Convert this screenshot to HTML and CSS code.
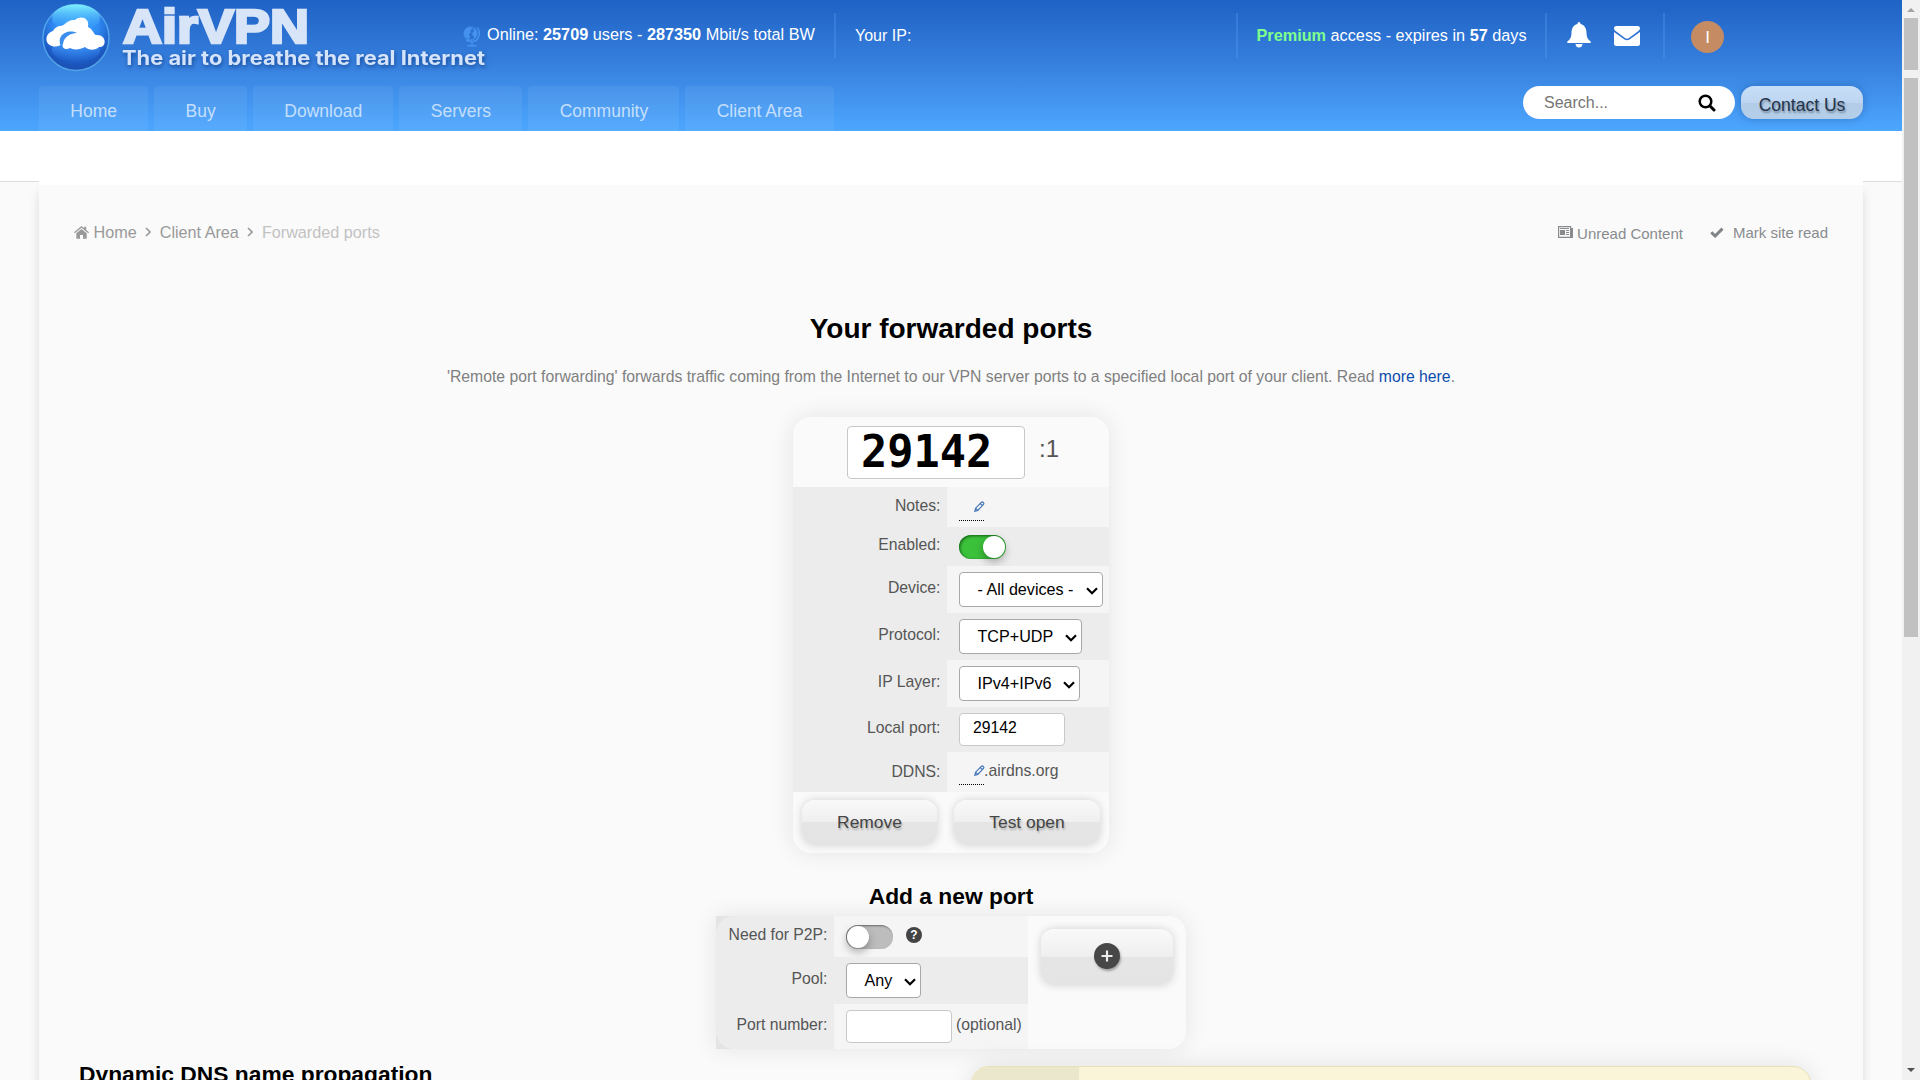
FILE: index.html
```html
<!DOCTYPE html>
<html lang="en">
<head>
<meta charset="utf-8">
<title>Forwarded ports - AirVPN</title>
<link rel="stylesheet" href="styles.css">
</head>
<body>
<div class="page">
  <header class="header">
    <div class="topbar">
      <svg class="logo" width="424" height="74" viewBox="0 0 424 74">
        <defs>
          <radialGradient id="orb" cx=".5" cy=".3" r=".75">
            <stop offset="0" stop-color="#3aa0fb"/><stop offset=".45" stop-color="#2f8bf3"/><stop offset=".78" stop-color="#1c57c0"/><stop offset="1" stop-color="#1a4ba8"/>
          </radialGradient>
          <linearGradient id="shine" x1="0" y1="0" x2="0" y2="1">
            <stop offset="0" stop-color="#7ff2ff"/><stop offset="1" stop-color="#3aa0fb" stop-opacity="0"/>
          </linearGradient>
          <linearGradient id="low" x1="0" y1="0" x2="0" y2="1">
            <stop offset="0" stop-color="#4da4ff"/><stop offset="1" stop-color="#2a6fe0" stop-opacity="0"/>
          </linearGradient>
        </defs>
        <circle cx="37" cy="37.500" r="33" fill="url(#orb)" stroke="#5fb6f3" stroke-opacity=".75" stroke-width="1.500"/>
        <ellipse cx="37" cy="18" rx="24" ry="13.500" fill="url(#shine)"/>
        <ellipse cx="37" cy="50" rx="24" ry="13" fill="url(#low)"/>
        <path d="M13 46C5 44 6 33 14 31C16 27 20 26 21 26C26 26 28 19 36 20C42 15 51 18 49 27C54 29 55 35 57 35C68 34 68 48 60 47C56 51 49 50 46 47C41 50 34 50 31 48C26 51 22 47 24 43C20 47 16 47 13 46Z" fill="#fff"/>
        <path d="M22 46C17 36 28 28 38 33C32 33.500 25 36 24 44Z" fill="#3b8eed"/>
        <text class="logo-name" x="84" y="42.700" textLength="186" lengthAdjust="spacingAndGlyphs">AirVPN</text>
        <text class="logo-tag" x="83" y="65" textLength="363" lengthAdjust="spacingAndGlyphs">The air to breathe the real Internet</text>
      </svg>
      <div class="online">
        <svg class="globe" width="18" height="21" viewBox="0 0 18 21"><circle cx="7.500" cy="7.500" r="6.500" fill="#2d72d2" stroke="#4693ef" stroke-width="1"/><path d="M2 4Q4 1 8 1.500L9 3 7 5 8 6.500 5.500 8 7 10 6 13Q1 11 1 7zM10 3l3 1 1 4-2 4-2-2-1-3 2-1z" fill="#4693ef"/><path d="M14 1.500C18.500 6 16 15.500 9 15.500Q5.500 15.500 3 14M9 16v3M4.500 19.700h9" fill="none" stroke="#4693ef" stroke-width="1.500"/></svg>
        <span>Online: <b>25709</b> users - <b>287350</b> Mbit/s total BW</span>
      </div>
      <div class="your-ip">Your IP:</div>
      <div class="premium"><b class="premium-name">Premium</b> access - expires in <b>57</b> days</div>
      <div class="alerts">
        <svg width="24" height="26" viewBox="0 0 24 26"><path fill="#fff" d="M12 0q1.500 0 1.500 2C18 3 19.500 7 19.500 11q0 6 4.200 8.500v1.500H.3v-1.500Q4.500 17 4.500 11C4.500 7 6 3 10.500 2Q10.500 0 12 0zM8.500 22h7q-.5 3.500-3.500 3.500T8.500 22z"/></svg>
        <svg width="26" height="20" viewBox="0 0 26 20"><path fill="#fff" d="M2.500 0h21Q26 0 26 2.300c0 1-.7 2-1.600 2.700L15 12q-2 1.400-4 0L1.600 5C.7 4.300 0 3.500 0 2.300Q0 0 2.500 0zM0 6l10.500 7.500q2.500 1.500 5 0L26 6v11.500q0 2.500-2.500 2.500h-21Q0 20 0 17.500z"/></svg>
      </div>
      <div class="user"><span class="avatar">I</span></div>
    </div>
    <div class="navbar">
      <nav class="tabs"><a>Home</a><a>Buy</a><a>Download</a><a>Servers</a><a>Community</a><a>Client Area</a></nav>
      <div class="search"><span>Search...</span>
        <svg width="18" height="18" viewBox="0 0 18 18"><circle cx="7.500" cy="7.500" r="5.800" fill="none" stroke="#000" stroke-width="2.500"/><path d="M12 12l4 4" stroke="#000" stroke-width="3" stroke-linecap="round"/></svg>
      </div>
      <a class="contact">Contact Us</a>
    </div>
  </header>
  <div class="body-area">
    <main class="content">
      <div class="crumb-row">
        <div class="crumbs">
          <svg width="15" height="13" viewBox="0 0 15 13"><path fill="#999" d="M7.500 3l5.200 4.300v4.900q0 .5-.5.500H9V9H6v3.700H2.800q-.5 0-.5-.5V7.300zM7.500 0l2.700 2.200V.8h2v3.100L15 6.200l-.8 1L7.500 1.700.8 7.200l-.8-1z"/></svg>
          <span class="crumb-home">Home</span>
          <svg class="angle" width="6" height="10" viewBox="0 0 6 10"><path d="M1 1l4 4-4 4" fill="none" stroke="#999" stroke-width="1.600"/></svg>
          <span>Client Area</span>
          <svg class="angle" width="6" height="10" viewBox="0 0 6 10"><path d="M1 1l4 4-4 4" fill="none" stroke="#999" stroke-width="1.600"/></svg>
          <span class="current">Forwarded ports</span>
        </div>
        <div class="site-links">
          <span class="unread"><svg width="15" height="12" viewBox="0 0 15 12"><path d="M.6 .6h12v10.800H.6zM12.600 2.500h1.800v8.900h-3" fill="none" stroke="#888c8f" stroke-width="1.200"/><path d="M2 4h5v5H2zM2 2h9v1H2zM8 4h3v1H8zM8 6h3v1H8zM8 8h3v1H8zM12 2h2.500v9H12z" fill="#888c8f"/></svg> Unread Content</span>
          <span class="mark"><svg width="14" height="11" viewBox="0 0 14 11"><path d="M1.300 5.300l3.800 3.700 7.400-7.400" fill="none" stroke="#808488" stroke-width="3"/></svg>Mark site read</span>
        </div>
      </div>
      <h1>Your forwarded ports</h1>
      <p class="intro">'Remote port forwarding' forwards traffic coming from the Internet to our VPN server ports to a specified local port of your client. Read <a>more here</a>.</p>

      <section class="port-card">
        <div class="port-head"><div class="port-input">29142</div><span>:1</span></div>
        <div class="fields">
          <div class="label notes">Notes:</div><div class="value light"><span class="edit"><svg width="11" height="11" viewBox="0 0 11 11"><path d="M.8 10.200l.8-3L7.300 1.300q1-.9 2 .1t.2 2L3.800 9.400zM1.600 7.200l2.200 2.200M6.300 2.500l2.100 2.100" fill="none" stroke="#3a6fb5" stroke-width="1.100"/></svg></span></div>
          <div class="label">Enabled:</div><div class="value"><span class="toggle on"></span></div>
          <div class="label">Device:</div><div class="value light"><div class="select device">- All devices -<svg width="12" height="8" viewBox="0 0 12 8"><path d="M1 1.300l5 4.900 5-4.900" fill="none" stroke="#000" stroke-width="2.200"/></svg></div></div>
          <div class="label">Protocol:</div><div class="value"><div class="select protocol">TCP+UDP<svg width="12" height="8" viewBox="0 0 12 8"><path d="M1 1.300l5 4.900 5-4.900" fill="none" stroke="#000" stroke-width="2.200"/></svg></div></div>
          <div class="label">IP Layer:</div><div class="value light"><div class="select layer">IPv4+IPv6<svg width="12" height="8" viewBox="0 0 12 8"><path d="M1 1.300l5 4.900 5-4.900" fill="none" stroke="#000" stroke-width="2.200"/></svg></div></div>
          <div class="label">Local port:</div><div class="value"><div class="textbox">29142</div></div>
          <div class="label ddns">DDNS:</div><div class="value light"><span class="edit"><svg width="11" height="11" viewBox="0 0 11 11"><path d="M.8 10.200l.8-3L7.300 1.300q1-.9 2 .1t.2 2L3.800 9.400zM1.600 7.200l2.200 2.200M6.300 2.500l2.100 2.100" fill="none" stroke="#3a6fb5" stroke-width="1.100"/></svg></span><span class="domain">.airdns.org</span></div>
        </div>
        <div class="actions"><button class="button remove">Remove</button><button class="button test">Test open</button></div>
      </section>

      <h2 class="add-title">Add a new port</h2>
      <section class="add-card">
        <div class="add-fields">
          <div class="label p2p">Need for P2P:</div><div class="value light p2p-value"><span class="toggle"></span><span class="help">?</span></div>
          <div class="label">Pool:</div><div class="value"><div class="select pool">Any<svg width="12" height="8" viewBox="0 0 12 8"><path d="M1 1.300l5 4.900 5-4.900" fill="none" stroke="#000" stroke-width="2.200"/></svg></div></div>
          <div class="label">Port number:</div><div class="value light"><div class="textbox"></div><span class="optional">(optional)</span></div>
        </div>
        <button class="button add"><svg width="26" height="26" viewBox="0 0 26 26"><circle cx="13" cy="13" r="13" fill="#474747"/><path d="M13 7.500v11M7.500 13h11" stroke="#ececec" stroke-width="2.200"/></svg></button>
      </section>
      <div class="bottom">
        <h2 class="dns-title">Dynamic DNS name propagation</h2>
        <aside class="note"><div class="note-side"></div></aside>
      </div>
    </main>
  </div>
</div>
<div class="scrollbar"><i class="arrow-up"></i><i class="thumb first"></i><i class="thumb second"></i><i class="arrow-down"></i></div>
</body>
</html>
```
FILE: styles.css
```css
* { box-sizing: border-box; }
body { margin: 0; width: 1920px; height: 1080px; overflow: hidden; display: flex; background: #fff; font: 16px/20px "Liberation Sans", Arial, sans-serif; color: #555; }
svg { display: block; flex: none; }
.page { width: 1902px; height: 1080px; overflow: hidden; }

.header { height: 131px; padding: 0 39px; background: linear-gradient(#1f62c5, #367fdd 48%, #4da7ff); color: #fff; font-size: 16.250px; }
.topbar { height: 86px; display: flex; align-items: flex-start; white-space: nowrap; }
.logo { overflow: visible; }
.logo-name { font: bold 48px "Liberation Sans", Arial, sans-serif; fill: #d8e5f8; stroke: #d8e5f8; stroke-width: 2.6px; }
.logo-tag { font: bold 19.500px Inter, "Liberation Sans", sans-serif; fill: #d5e4fb; filter: drop-shadow(1px 2px 2px #164a9a); }
.online { width: 371px; height: 58px; padding-top: 24px; display: flex; }
.online span { margin-left: 6px; }
.globe { margin-top: 2px; }
.your-ip, .premium, .alerts, .user { margin-top: 13px; height: 45px; border-left: 2px solid rgba(100, 165, 245, .28); }
.your-ip { width: 402px; padding: 13px 0 0 19px; font-size: 16px; }
.premium { width: 309px; padding: 12px 0 0 18.500px; }
.premium-name { color: #7fff8d; }
.alerts { width: 118px; padding: 9px 0 0 20px; display: flex; gap: 23px; }
.alerts svg + svg { margin-top: 4px; }
.user { padding: 8px 0 0 26px; }
.avatar { display: block; width: 33px; height: 32px; border-radius: 50%; background: #c58b62; text-align: center; line-height: 33px; font-size: 17px; }
.navbar { height: 45px; display: flex; align-items: flex-start; font-size: 17.500px; }
.tabs { display: flex; gap: 6px; width: 1484px; flex: none; }
.tabs a { height: 45px; padding: 15px 31.300px 0; border-radius: 4px 4px 0 0; background: rgba(255, 255, 255, .06); color: rgba(255, 255, 255, .68); }
.search { width: 212px; height: 33px; border-radius: 17px; background: #fff; color: #757575; padding: 0 19px 0 21px; display: flex; align-items: center; justify-content: space-between; font-size: 16px; }
.contact { margin-left: 6px; width: 122px; height: 33px; border-radius: 13px; text-align: center; line-height: 39px; font-size: 17.500px; color: #23354c; text-shadow: 1px 2px 2px rgba(0, 0, 0, .35); background: linear-gradient(#c7def8, #bdd5f0 50%, #b2cce9 51%, #b5cee8); box-shadow: 0 0 8px rgba(20, 60, 120, .35); }

.body-area { height: 949px; padding: 0 39px; background: linear-gradient(#fff 50px, #ddd 50px, #ddd 51px, #fafafa 51px); }
.content { height: 949px; border-top: 54px solid #fff; background: #fafafa; box-shadow: 0 61px 10px rgba(0, 0, 0, .12); display: flex; flex-direction: column; align-items: center; overflow: hidden; }
.crumb-row { width: 1754px; height: 90px; flex: none; padding-top: 37px; display: flex; justify-content: space-between; color: #999; font-size: 16.200px; }
.crumbs { display: flex; align-items: center; height: 20px; }
.crumb-home { margin-left: 4.500px; }
.angle { margin: 0 9px 0 8px; }
.current { color: #c2c2c2; }
.site-links { display: flex; font-size: 15px; color: #888c8f; line-height: 20px; padding-top: 1px; }
.unread { display: flex; gap: 4px; padding-top: 1px; }
.unread svg { margin-top: 2px; }
.mark { display: flex; gap: 9px; margin-left: 27px; }
.mark svg { margin-top: 4px; }
h1, h2 { margin: 0; color: #000; flex: none; }
h1 { font-size: 28px; line-height: 34px; margin-top: 37px; }
.intro { margin: 21px 0 0; color: #808080; height: 20px; flex: none; white-space: nowrap; font-size: 15.750px; }
.intro a { color: #0c4cad; }

.port-card { margin-top: 30px; width: 316px; height: 436px; flex: none; border-radius: 18px; background: #fafafa; box-shadow: 0 0 25px rgba(0, 0, 0, .09); overflow: hidden; font-size: 15.750px; }
.port-head { height: 70px; padding: 9px 0 0 54px; display: flex; }
.port-head span { margin: 13px 0 0 14px; font-size: 24px; }
.port-input { width: 178px; height: 53px; border: 1px solid #c8c8c8; border-radius: 4px; background: #fff; color: #000; padding-left: 13px; font: bold 43.600px/51px "DejaVu Sans Mono", monospace; }
.fields { display: grid; grid-template-columns: 154px 162px; grid-template-rows: 40px 39px 47px 47px 47px 45px 40px; background: #ececec; }
.label { text-align: right; padding-right: 6.500px; display: flex; align-items: center; justify-content: flex-end; padding-bottom: 3px; white-space: nowrap; }
.value { padding-left: 12px; display: flex; align-items: center; background: #ececec; white-space: nowrap; }
.value.light { background: #f5f5f5; }
.edit { width: 25px; height: 28px; align-self: flex-end; margin-bottom: 6px; border-bottom: 1px dotted #000; padding: 8px 0 0 15px; }
.notes { padding-bottom: 2px; }
.ddns { padding-bottom: 0; }
.ddns + .value .edit { margin-bottom: 7px; }
.domain { margin-top: -3px; }
.select { height: 35px; border: 1px solid #a8a8a8; border-radius: 4px; background: #fff; color: #000; font-size: 16.150px; padding: 0 4px 1px 17.500px; display: flex; align-items: center; justify-content: space-between; }
.select svg { margin-top: 3px; }
.device { width: 144px; }
.protocol { width: 123px; }
.layer { width: 121px; }
.pool { width: 75px; }
.textbox { width: 106px; height: 33px; border: 1px solid #c8c8c8; border-radius: 4px; background: #fff; color: #000; padding-left: 13px; line-height: 28px; }
.toggle { width: 47px; height: 24px; border-radius: 12px; background: #bdbdbd; box-shadow: inset 1px 1px 2px #666; display: flex; padding: 1px; }
.toggle::after { content: ""; width: 22px; height: 22px; border-radius: 50%; background: #fff; box-shadow: 0 4px 8px rgba(0, 0, 0, .3); }
.toggle.on { background: #3cc13b; justify-content: flex-end; box-shadow: inset 1px 1px 3px #115c15; }
.actions { display: flex; height: 61px; padding: 8px 9px; justify-content: space-between; }
.button { border: 0; padding: 0; height: 45px; border-radius: 13px; background: linear-gradient(#f9f9f9, #efefef 49%, #e5e5e5 50%, #e4e4e4); box-shadow: 0 0 8px rgba(0, 0, 0, .17); font: 17.400px "Liberation Sans", Arial, sans-serif; color: #444; text-shadow: 1px 2px 2px rgba(0, 0, 0, .25); }
.remove { width: 135px; }
.test { width: 146px; }

.add-title { margin-top: 29px; height: 34px; line-height: 28px; font-size: 22.800px; }
.add-card { width: 470px; height: 133px; flex: none; display: flex; background: linear-gradient(90deg, #e4e4e4 20px, #fafafa 20px); border-radius: 0 18px 18px 0; box-shadow: 0 0 25px rgba(0, 0, 0, .09); font-size: 15.750px; }
.add-fields { display: grid; grid-template-columns: 118px 194px; grid-template-rows: 41px 47px 45px; background: #ececec; border-radius: 18px 0 0 18px; }
.p2p { padding-bottom: 3px; }
.help { width: 16px; height: 16px; margin: -3px 0 0 13px; border-radius: 50%; background: #444; color: #fff; font: bold 12px/16px "Liberation Sans", Arial, sans-serif; text-align: center; }
.optional { margin: -3px 0 0 4px; }
.add { width: 132px; height: 56px; margin: 13px 0 0 13px; display: flex; align-items: center; justify-content: center; }
.add svg { margin-top: -3px; filter: drop-shadow(1px 2px 1px rgba(0, 0, 0, .3)); }
.bottom { width: 1744px; height: 97px; flex: none; padding-right: 12px; display: flex; justify-content: space-between; }
.dns-title { margin: 11px 0 0; font-size: 22.800px; line-height: 28px; white-space: nowrap; }
.note { margin-top: 17px; width: 840px; height: 80px; border: 1px solid #e8e1b5; border-radius: 18px; background: #faf5d8; box-shadow: 0 0 25px rgba(0, 0, 0, .1); overflow: hidden; }
.note-side { width: 107px; height: 80px; background: #eae7cc; }

.scrollbar { width: 18px; height: 1080px; background: #f1f1f1; display: flex; flex-direction: column; align-items: center; }
.arrow-up { margin: 8px 0 6px; border: 4px solid transparent; border-top: 0; border-bottom-color: #a3a3a3; }
.thumb { width: 14px; background: #c1c1c1; }
.first { height: 52px; }
.second { margin-top: 8px; height: 559px; }
.arrow-down { margin-top: 431px; border: 4px solid transparent; border-bottom: 0; border-top-color: #505050; }
```
